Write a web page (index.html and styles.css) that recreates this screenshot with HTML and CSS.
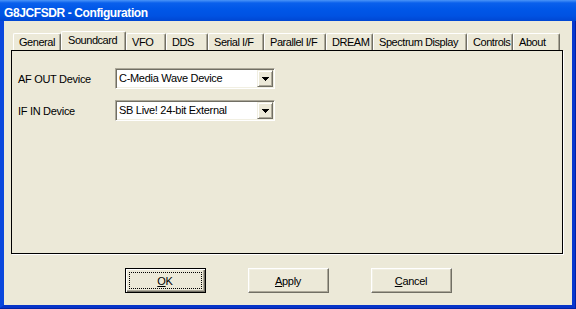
FILE: index.html
```html
<!DOCTYPE html>
<html lang="en">
<head>
  <meta charset="UTF-8" />
  <title>G8JCFSDR - Configuration</title>
  <link rel="stylesheet" href="styles.css">
</head>
<body>

  <div class="frame">
    <div class="titlebar">G8JCFSDR - Configuration</div>

    <div class="client">
      <div class="tabs">
        <div class="tab">General</div>
        <div class="tab tab-active">Soundcard</div>
        <div class="tab">VFO</div>
        <div class="tab">DDS</div>
        <div class="tab">Serial I/F</div>
        <div class="tab">Parallel I/F</div>
        <div class="tab">DREAM</div>
        <div class="tab">Spectrum Display</div>
        <div class="tab">Controls</div>
        <div class="tab">About</div>
      </div>

      <div class="pane">
        <label class="field-label">AF OUT Device</label>
        <div class="combo">
          <span class="combo-text">C-Media Wave Device</span>
          <span class="combo-btn">
            <svg width="7" height="4" viewBox="0 0 7 4" shape-rendering="crispEdges"><path d="M0 0h7v1H0zM1 1h5v1H1zM2 2h3v1H2zM3 3h1v1H3z" fill="#000"/></svg>
          </span>
        </div>

        <label class="field-label">IF IN Device</label>
        <div class="combo">
          <span class="combo-text">SB Live! 24-bit External</span>
          <span class="combo-btn">
            <svg width="7" height="4" viewBox="0 0 7 4" shape-rendering="crispEdges"><path d="M0 0h7v1H0zM1 1h5v1H1zM2 2h3v1H2zM3 3h1v1H3z" fill="#000"/></svg>
          </span>
        </div>
      </div>

      <div class="buttons">
        <button class="btn btn-default"><span class="focus"><u>O</u>K</span></button>
        <button class="btn"><u>A</u>pply</button>
        <button class="btn"><u>C</u>ancel</button>
      </div>
    </div>
  </div>

</body>
</html>
```

FILE: styles.css
```css
:root {
  --face: #ECE9D8;
  --light: #F1EFE2;
  --shadow: #ACA899;
  --dark: #716F64;
}

* { box-sizing: border-box; margin: 0; padding: 0; }

body {
  width: 576px;
  height: 309px;
  overflow: hidden;
  font-family: 'Liberation Sans', Arial, sans-serif;
  font-size: 11px;
  letter-spacing: -0.3px;
  color: #000;
}

.frame {
  display: flex;
  flex-direction: column;
  width: 576px;
  height: 309px;
  background: #0021A6;
}

.titlebar {
  height: 21px;
  padding: 4px 0 0 4px;
  line-height: 18px;
  color: #fff;
  font-weight: bold;
  font-size: 12px;
  letter-spacing: -0.4px;
  background: linear-gradient(#4A94F8 0, #0A60EC 3px, #0057E8 9px, #0052E2 16px, #0046D2 21px);
}

.client {
  flex: 1;
  margin: 0 1px 1px 0;
  background: var(--face);
  border-left: 4px solid #0A47DD;
  border-right: 3px solid #0737CF;
  border-bottom: 3px solid #0734C8;
  padding-top: 10px;
}

/* tab strip */
.tabs {
  display: grid;
  grid-template-columns: 48px 65px 40px 42px 56px 62px 47px 94px 46px 47px;
  align-items: end;
  height: 19px;
  margin-left: 9px;
}

.tab {
  height: 17px;
  line-height: 17px;
  padding-left: 5px;
  white-space: nowrap;
  overflow: hidden;
  letter-spacing: -0.45px;
  border-top: 1px solid #fff;
  border-left: 1px solid #fff;
  border-right: 1px solid var(--dark);
  border-radius: 2px 2px 0 0;
  box-shadow: inset -1px 0 0 var(--shadow);
}

.tab-active {
  height: 19px;
  line-height: 17px;
  padding-left: 6px;
}

.pane {
  display: grid;
  grid-template-columns: 97px 160px;
  align-content: start;
  align-items: center;
  row-gap: 11px;
  height: 204px;
  margin: 0 9px 0 7px;
  padding: 17px 0 0 6px;
  border: 1px solid #000;
  box-shadow: 1px 1px 0 #fff;
}

.combo {
  display: flex;
  height: 21px;
  padding: 1px;
  background: #fff;
  border: 1px solid;
  border-color: var(--shadow) #fff #fff var(--shadow);
  box-shadow: inset 1px 1px 0 var(--dark), inset -1px -1px 0 var(--light);
}

.combo-text {
  flex: 1;
  padding-left: 2px;
  line-height: 17px;
  white-space: nowrap;
}

.combo-btn {
  display: flex;
  align-items: center;
  justify-content: center;
  width: 16px;
  height: 17px;
  background: var(--face);
  border: 1px solid;
  border-color: var(--light) var(--dark) var(--dark) var(--light);
  box-shadow: inset 1px 1px 0 #fff, inset -1px -1px 0 var(--shadow);
}

/* dialog buttons */
.buttons {
  display: flex;
  justify-content: center;
  gap: 42px;
  margin-top: 14px;
}

.btn {
  width: 81px;
  height: 25px;
  font: inherit;
  letter-spacing: inherit;
  background: var(--face);
  border: 1px solid;
  border-color: #fff var(--dark) var(--dark) #fff;
  box-shadow: inset -1px -1px 0 var(--shadow), inset 1px 1px 0 var(--light);
}

.btn-default {
  position: relative;
  border-color: #000;
  box-shadow: inset 1px 1px 0 #fff, inset -1px -1px 0 var(--dark), inset -2px -2px 0 var(--shadow);
}

.focus {
  position: absolute;
  inset: 3px;
  display: flex;
  align-items: center;
  justify-content: center;
  border: 1px dotted #000;
}
```
